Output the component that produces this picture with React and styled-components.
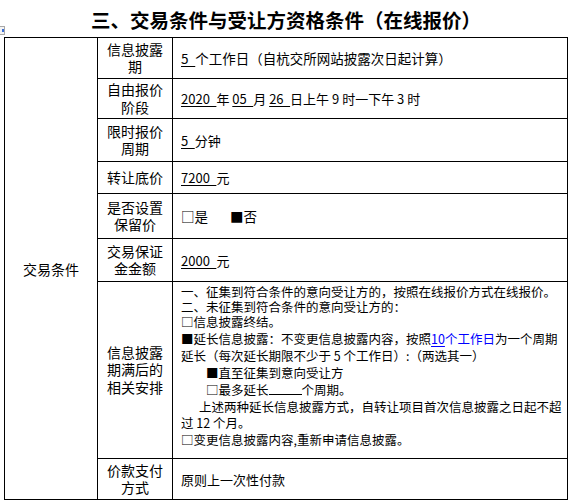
import React from "react";
import styled, { createGlobalStyle } from "styled-components";

const GlobalStyle = createGlobalStyle`
  html, body {
    margin: 0;
    padding: 0;
    background: #fff;
  }
  body {
    font-family: "Noto Sans CJK SC", "Noto Sans", sans-serif;
    color: #000;
  }
`;

const Page = styled.div`
  position: relative;
  width: 573px;
  height: 502px;
  padding-left: 4px;
  box-sizing: border-box;
`;

const Title = styled.h3`
  margin: 0;
  width: 564px;
  height: 37px;
  padding-top: 2px;
  box-sizing: border-box;
  display: flex;
  align-items: center;
  justify-content: center;
  font-size: 19.5px;
  font-weight: 700;
`;

// clipped table-move handle left of the table
const MoveHandle = styled.span`
  position: absolute;
  left: 0;
  top: 26px;
  width: 5px;
  height: 9px;
  border: 1px solid #a8a8a8;
  border-left: none;
  box-sizing: border-box;
  background: #f4f4f4;

  &::after {
    content: "";
    position: absolute;
    right: 0;
    top: 2px;
    width: 2px;
    height: 3px;
    background: #3b6fd6;
  }
`;

const Table = styled.div`
  display: grid;
  grid-template-columns: 93px 75px 395px;
  grid-template-rows: 41px 40px 43px 32px 45px 43px 177px 41px;
  width: 564px;
  border-top: 1px solid #000;
  border-left: 1px solid #000;
  box-sizing: border-box;
`;

const Cell = styled.div`
  border-right: 1px solid #000;
  border-bottom: 1px solid #000;
  box-sizing: border-box;
  display: flex;
  align-items: center;
  min-width: 0;
`;

const GroupCell = styled(Cell)`
  grid-row: 1 / -1;
  justify-content: center;
  font-size: 14px;
`;

const LabelCell = styled(Cell)`
  justify-content: center;
  text-align: center;
  padding: 0 5px;
  font-size: 14px;
  line-height: 17.5px;
`;

const ValueCell = styled(Cell)`
  padding: 0 4px 0 8px;
  font-size: ${(p) => p.$size || 13}px;
  white-space: pre;
`;

const NotesCell = styled(Cell)`
  display: block;
  padding: 3px 4px 0 8px;
`;

const Note = styled.div`
  font-size: 12.5px;
  line-height: ${(p) => p.$lh || 16.9}px;
  padding-left: ${(p) => p.$indent || 0}px;
  white-space: pre;
`;

const Fill = styled.span`
  text-decoration: underline;
  text-underline-offset: 2px;
  color: ${(p) => p.$color || "inherit"};
`;

const Blank = styled.span`
  display: inline-block;
  width: 33px;
  height: 11px;
  border-bottom: 1px solid #000;
`;

const Link = styled.span`
  color: #0000ff;
`;

const Option = styled.span`
  margin-left: ${(p) => p.$gap || 0}px;
`;

const SP = "\u2002";

export default function App() {
  return (
    <Page>
      <GlobalStyle />
      <MoveHandle />
      <Title>三、交易条件与受让方资格条件（在线报价）</Title>
      <Table>
        <GroupCell>交易条件</GroupCell>

        <LabelCell>信息披露期</LabelCell>
        <ValueCell $size={13.5}>
          <Fill>{"5" + SP}</Fill>个工作日（自杭交所网站披露次日起计算）
        </ValueCell>

        <LabelCell>自由报价阶段</LabelCell>
        <ValueCell>
          <Fill>{"2020" + SP}</Fill>{"年 "}<Fill>{"05" + SP}</Fill>{"月 "}
          <Fill>{"26" + SP}</Fill>{"日上午 9 时一下午 3 时"}
        </ValueCell>

        <LabelCell>限时报价周期</LabelCell>
        <ValueCell>
          <Fill>{"5" + SP}</Fill>分钟
        </ValueCell>

        <LabelCell>转让底价</LabelCell>
        <ValueCell>
          <Fill>{"7200" + SP}</Fill>元
        </ValueCell>

        <LabelCell>是否设置保留价</LabelCell>
        <ValueCell $size={13.5}>
          □是<Option $gap={22}>■否</Option>
        </ValueCell>

        <LabelCell>交易保证金金额</LabelCell>
        <ValueCell>
          <Fill>{"2000" + SP}</Fill>元
        </ValueCell>

        <LabelCell>信息披露期满后的相关安排</LabelCell>
        <NotesCell>
          <Note $lh={14.5}>一、征集到符合条件的意向受让方的，按照在线报价方式在线报价。</Note>
          <Note $lh={14.5}>二、未征集到符合条件的意向受让方的：</Note>
          <Note>□信息披露终结。</Note>
          <Note>
            ■延长信息披露：不变更信息披露内容，按照<Fill $color="#0000ff">10</Fill>
            <Link>个工作日</Link>为一个周期
          </Note>
          <Note>{"延长（每次延长期限不少于 5 个工作日）:（两选其一）"}</Note>
          <Note $indent={25}>■直至征集到意向受让方</Note>
          <Note $indent={25}>
            □最多延长<Blank />个周期。
          </Note>
          <Note $indent={18}>上述两种延长信息披露方式，自转让项目首次信息披露之日起不超</Note>
          <Note>{"过 12 个月。"}</Note>
          <Note>□变更信息披露内容,重新申请信息披露。</Note>
        </NotesCell>

        <LabelCell>价款支付方式</LabelCell>
        <ValueCell>原则上一次性付款</ValueCell>
      </Table>
    </Page>
  );
}
